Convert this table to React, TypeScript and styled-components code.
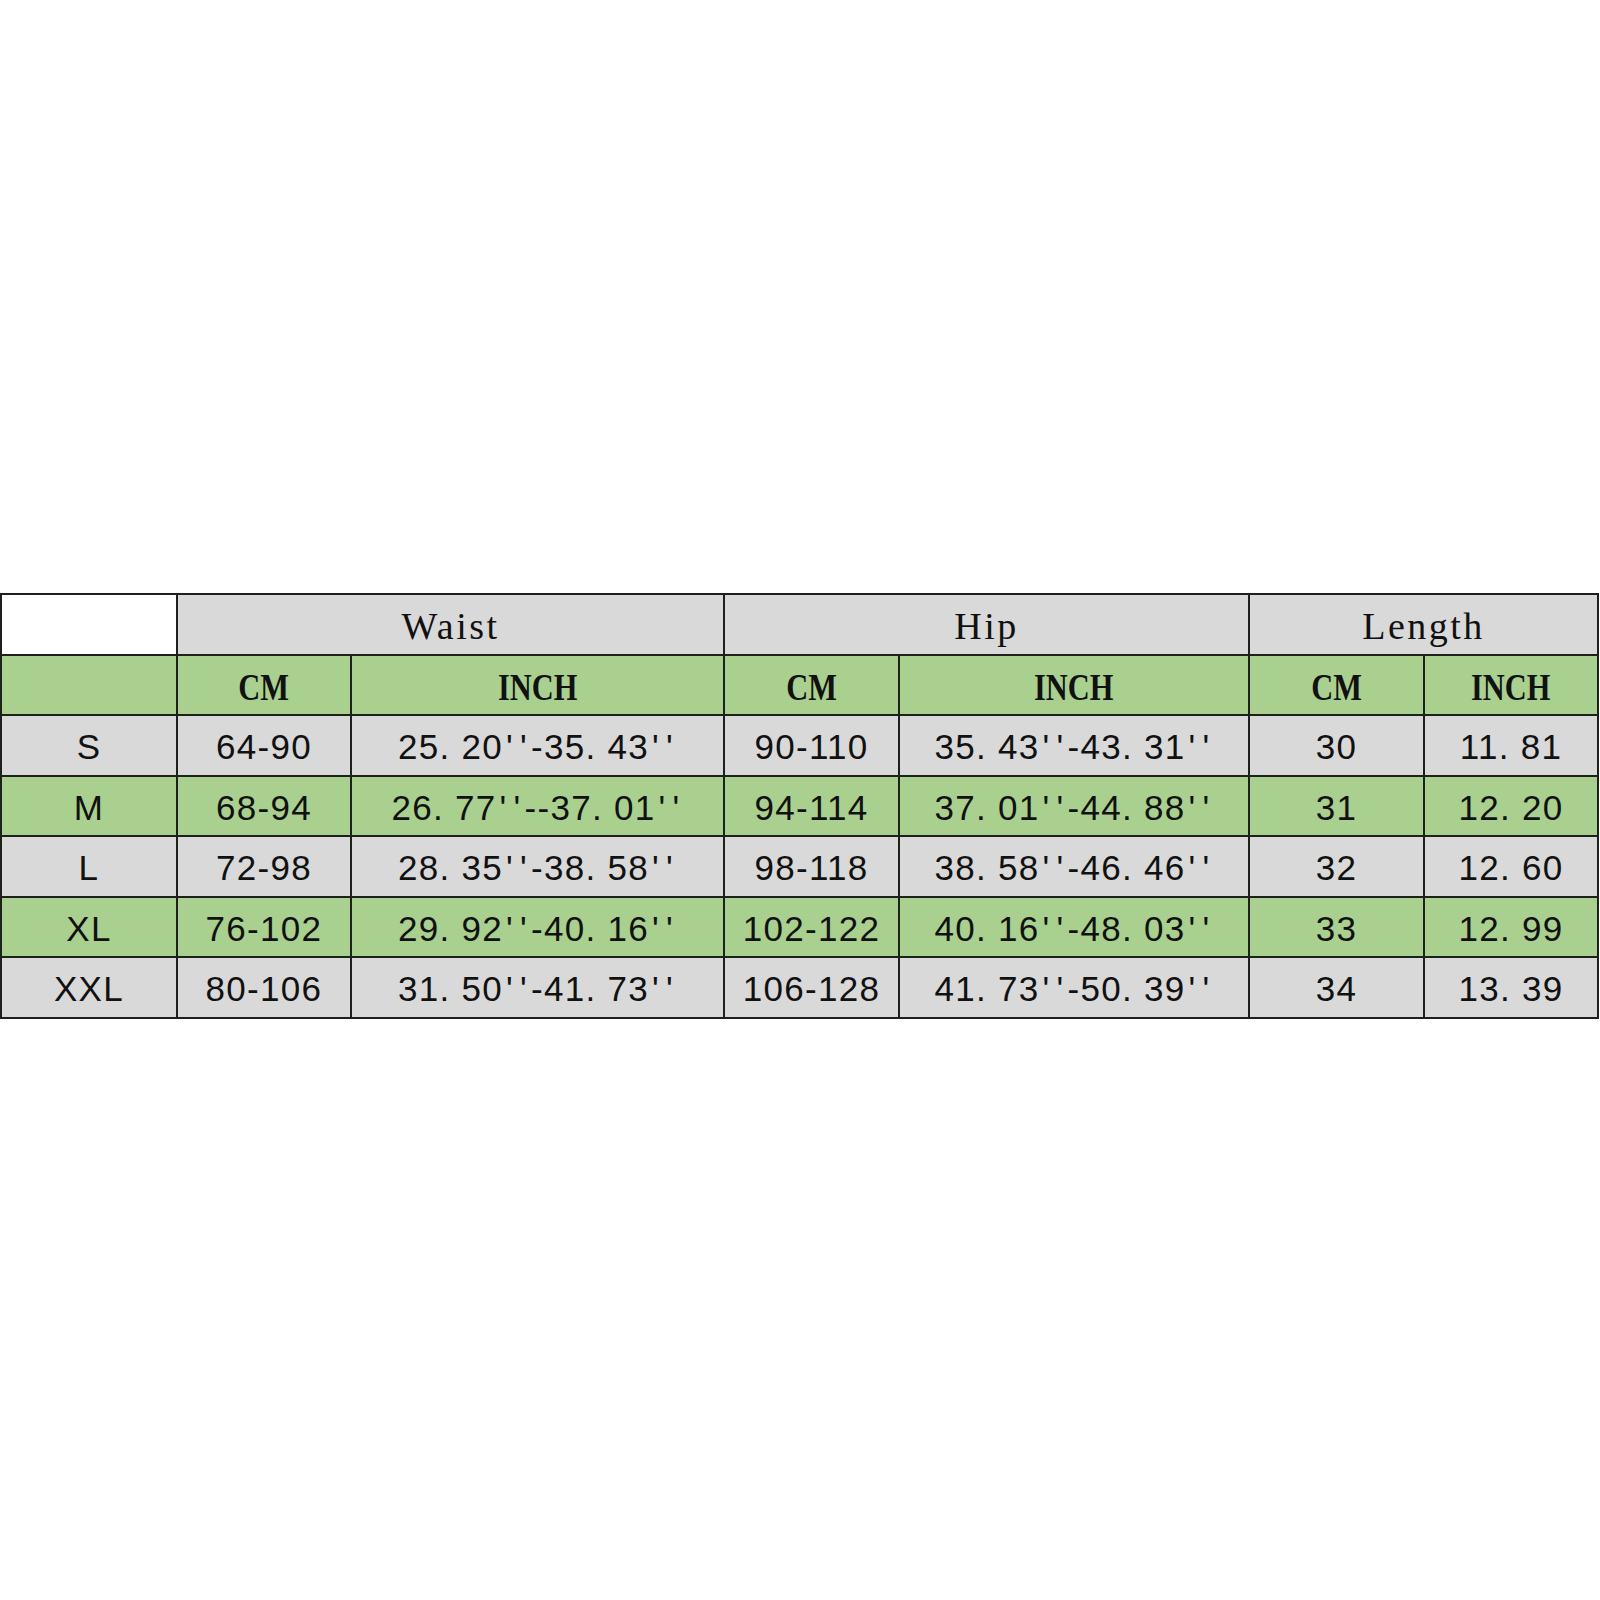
import React from "react";
import styled, { createGlobalStyle } from "styled-components";

type Tone = "white" | "grey" | "green";

interface SizeRow {
  size: string;
  values: string[];
}

const GlobalStyle = createGlobalStyle`
  html, body {
    margin: 0;
    padding: 0;
    background: #ffffff;
  }
`;

const tones: Record<Tone, string> = {
  white: "#ffffff",
  grey: "#d9d9d9",
  green: "#a9d08e",
};

const Page = styled.div`
  width: 1600px;
  height: 1600px;
  padding-top: 593px;
  box-sizing: border-box;
  background: #ffffff;
`;

const Chart = styled.div`
  display: grid;
  grid-template-columns: 174px 172px 371px 173px 348px 173px 172px;
  grid-auto-rows: 58.5px;
  gap: 2px;
  padding: 2px;
  width: 1599px;
  box-sizing: border-box;
  background: #1d211b;
`;

const Cell = styled.div<{ $tone: Tone; $span?: number }>`
  display: flex;
  align-items: center;
  justify-content: center;
  background: ${(p) => tones[p.$tone]};
  grid-column: ${(p) => (p.$span ? `span ${p.$span}` : "auto")};
  color: #111111;
  white-space: pre;
  overflow: hidden;
`;

const GroupTitle = styled.span`
  font-family: "Liberation Serif", "Times New Roman", serif;
  font-size: 38px;
  letter-spacing: 2.5px;
  padding-top: 4px;
`;

const UnitTitle = styled.span`
  display: inline-block;
  font-family: "Liberation Serif", "Times New Roman", serif;
  font-weight: 700;
  font-size: 38px;
  transform: scaleX(0.8);
  padding-top: 4px;
`;

const Value = styled.span`
  font-family: "Liberation Sans", Arial, sans-serif;
  font-size: 35px;
  letter-spacing: 1.3px;
  padding-top: 4px;
`;

const Tick = styled.span`
  margin: 0 3px;
`;

const renderValue = (text: string) =>
  text.split(/('{1})/).map((part, k) =>
    part === "'" ? <Tick key={k}>'</Tick> : part
  );

const rows: SizeRow[] = [
  { size: "S", values: ["64-90", "25. 20''-35. 43''", "90-110", "35. 43''-43. 31''", "30", "11. 81"] },
  { size: "M", values: ["68-94", "26. 77''--37. 01''", "94-114", "37. 01''-44. 88''", "31", "12. 20"] },
  { size: "L", values: ["72-98", "28. 35''-38. 58''", "98-118", "38. 58''-46. 46''", "32", "12. 60"] },
  { size: "XL", values: ["76-102", "29. 92''-40. 16''", "102-122", "40. 16''-48. 03''", "33", "12. 99"] },
  { size: "XXL", values: ["80-106", "31. 50''-41. 73''", "106-128", "41. 73''-50. 39''", "34", "13. 39"] },
];

const groups = ["Waist", "Hip", "Length"];

const App: React.FC = () => {
  return (
    <Page>
      <GlobalStyle />
      <Chart>
        <Cell $tone="white" />
        {groups.map((g) => (
          <Cell key={g} $tone="grey" $span={2}>
            <GroupTitle>{g}</GroupTitle>
          </Cell>
        ))}

        <Cell $tone="green" />
        {groups.map((g) => (
          <React.Fragment key={g}>
            <Cell $tone="green">
              <UnitTitle>CM</UnitTitle>
            </Cell>
            <Cell $tone="green">
              <UnitTitle>INCH</UnitTitle>
            </Cell>
          </React.Fragment>
        ))}

        {rows.map((row, i) => {
          const tone: Tone = i % 2 === 0 ? "grey" : "green";
          return (
            <React.Fragment key={row.size}>
              <Cell $tone={tone}>
                <Value>{row.size}</Value>
              </Cell>
              {row.values.map((v, j) => (
                <Cell key={j} $tone={tone}>
                  <Value>{renderValue(v)}</Value>
                </Cell>
              ))}
            </React.Fragment>
          );
        })}
      </Chart>
    </Page>
  );
};

export default App;
